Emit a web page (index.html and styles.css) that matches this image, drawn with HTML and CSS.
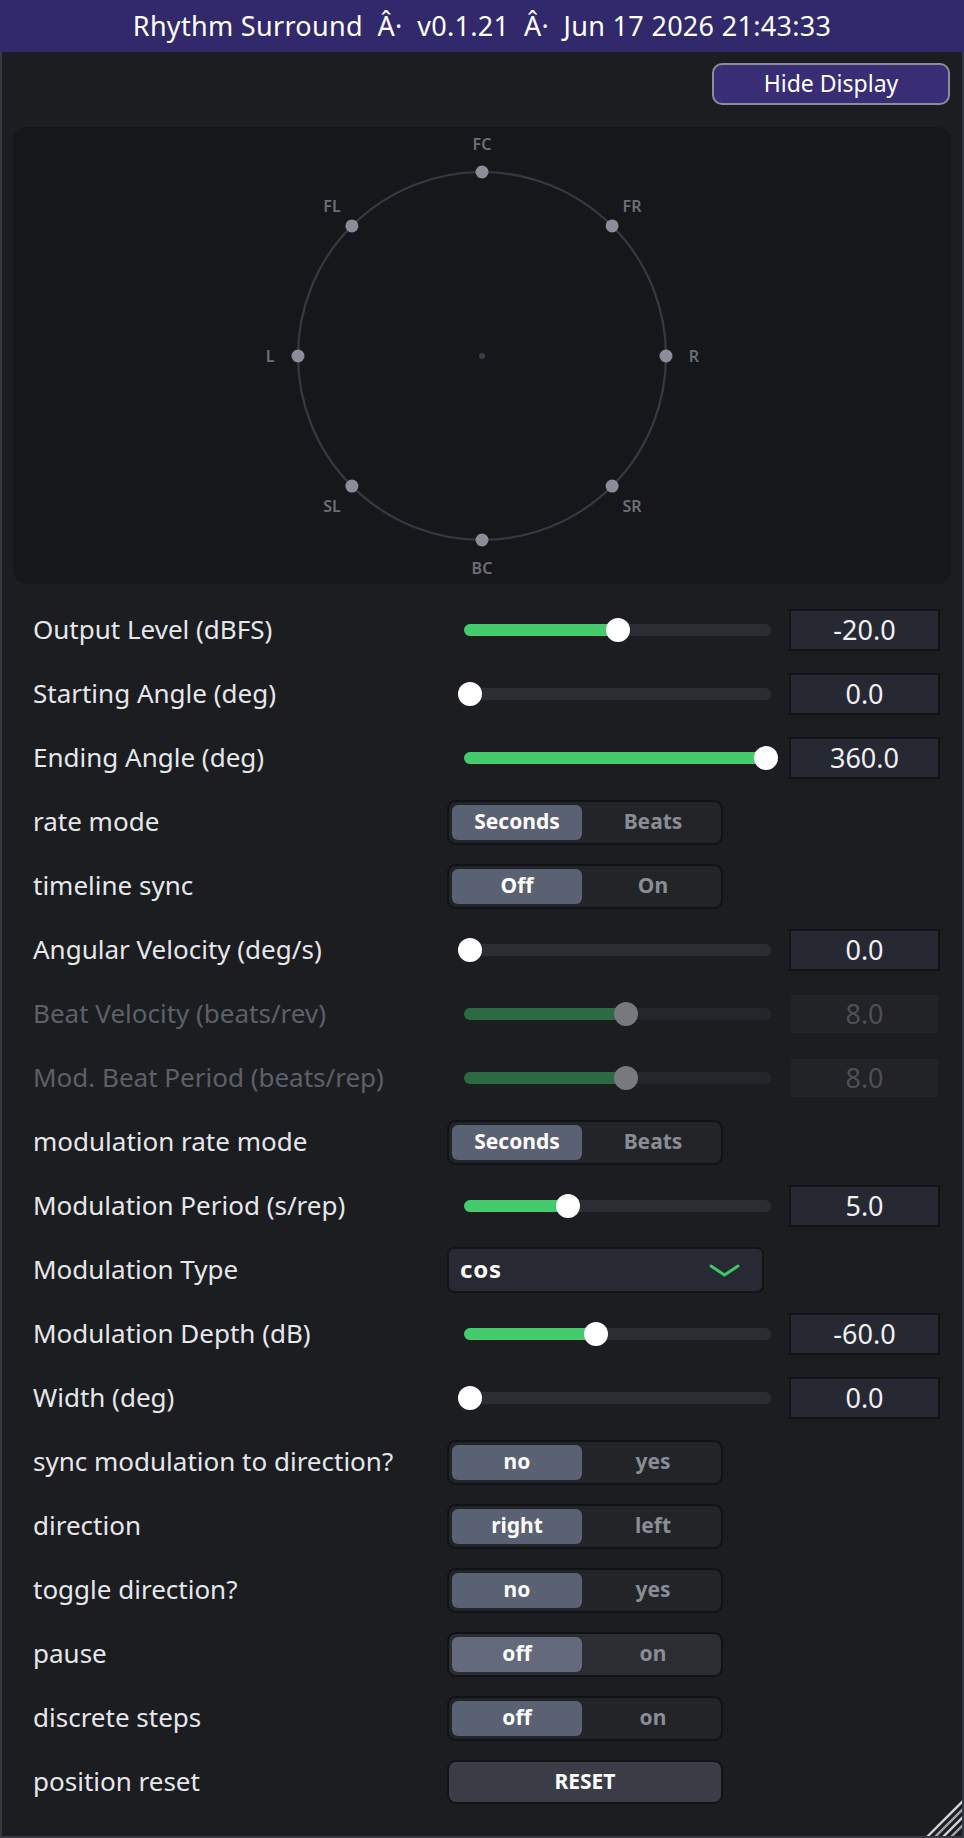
FILE: index.html
```html
<!DOCTYPE html>
<html lang="en">
<head>
<meta charset="utf-8">
<title>Rhythm Surround</title>
<link rel="stylesheet" href="styles.css">
</head>
<body>
<div class="app">
  <header class="titlebar">Rhythm Surround&nbsp; Â·&nbsp; v0.1.21&nbsp; Â·&nbsp; Jun 17 2026 21:43:33</header>
  <main class="frame">
    <div class="toolbar">
      <button class="hide-btn">Hide Display</button>
    </div>

    <section class="display">
      <svg class="speakers" width="938" height="457" viewBox="0 0 938 457">
        <circle cx="469" cy="229" r="184" fill="none" stroke="#363940" stroke-width="2.2"/>
        <circle cx="469" cy="229" r="3" fill="#3a3d45"/>
        <g fill="#8b8e98">
          <circle cx="469" cy="45" r="6.5"/>
          <circle cx="599.1" cy="98.9" r="6.5"/>
          <circle cx="653" cy="229" r="6.5"/>
          <circle cx="599.1" cy="359.1" r="6.5"/>
          <circle cx="469" cy="413" r="6.5"/>
          <circle cx="338.9" cy="359.1" r="6.5"/>
          <circle cx="285" cy="229" r="6.5"/>
          <circle cx="338.9" cy="98.9" r="6.5"/>
        </g>
        <g class="spk-label">
          <text x="469" y="17">FC</text>
          <text x="619" y="79">FR</text>
          <text x="681" y="229">R</text>
          <text x="619" y="379">SR</text>
          <text x="469" y="441">BC</text>
          <text x="319" y="379">SL</text>
          <text x="257" y="229">L</text>
          <text x="319" y="79">FL</text>
        </g>
      </svg>
    </section>

    <section class="params">
      <div class="row">
        <span class="label">Output Level (dBFS)</span>
        <div class="slider"><div class="fill" style="width:154px"></div><div class="thumb" style="left:142px"></div></div>
        <div class="value">-20.0</div>
      </div>
      <div class="row">
        <span class="label">Starting Angle (deg)</span>
        <div class="slider"><div class="thumb" style="left:-6px"></div></div>
        <div class="value">0.0</div>
      </div>
      <div class="row">
        <span class="label">Ending Angle (deg)</span>
        <div class="slider"><div class="fill" style="width:302px"></div><div class="thumb" style="left:290px"></div></div>
        <div class="value">360.0</div>
      </div>
      <div class="row">
        <span class="label">rate mode</span>
        <div class="seg"><span class="opt on">Seconds</span><span class="opt">Beats</span></div>
      </div>
      <div class="row">
        <span class="label">timeline sync</span>
        <div class="seg"><span class="opt on">Off</span><span class="opt">On</span></div>
      </div>
      <div class="row">
        <span class="label">Angular Velocity (deg/s)</span>
        <div class="slider"><div class="thumb" style="left:-6px"></div></div>
        <div class="value">0.0</div>
      </div>
      <div class="row disabled">
        <span class="label">Beat Velocity (beats/rev)</span>
        <div class="slider"><div class="fill" style="width:162px"></div><div class="thumb" style="left:150px"></div></div>
        <div class="value">8.0</div>
      </div>
      <div class="row disabled">
        <span class="label">Mod. Beat Period (beats/rep)</span>
        <div class="slider"><div class="fill" style="width:162px"></div><div class="thumb" style="left:150px"></div></div>
        <div class="value">8.0</div>
      </div>
      <div class="row">
        <span class="label">modulation rate mode</span>
        <div class="seg"><span class="opt on">Seconds</span><span class="opt">Beats</span></div>
      </div>
      <div class="row">
        <span class="label">Modulation Period (s/rep)</span>
        <div class="slider"><div class="fill" style="width:104px"></div><div class="thumb" style="left:92px"></div></div>
        <div class="value">5.0</div>
      </div>
      <div class="row">
        <span class="label">Modulation Type</span>
        <div class="select">
          <span>cos</span>
          <svg class="chev" width="31" height="13" viewBox="0 0 31 13"><path d="M2 2 L15.5 11 L29 2" fill="none" stroke="#3fc467" stroke-width="3" stroke-linecap="round" stroke-linejoin="round"/></svg>
        </div>
      </div>
      <div class="row">
        <span class="label">Modulation Depth (dB)</span>
        <div class="slider"><div class="fill" style="width:132px"></div><div class="thumb" style="left:120px"></div></div>
        <div class="value">-60.0</div>
      </div>
      <div class="row">
        <span class="label">Width (deg)</span>
        <div class="slider"><div class="thumb" style="left:-6px"></div></div>
        <div class="value">0.0</div>
      </div>
      <div class="row">
        <span class="label">sync modulation to direction?</span>
        <div class="seg"><span class="opt on">no</span><span class="opt">yes</span></div>
      </div>
      <div class="row">
        <span class="label">direction</span>
        <div class="seg"><span class="opt on">right</span><span class="opt">left</span></div>
      </div>
      <div class="row">
        <span class="label">toggle direction?</span>
        <div class="seg"><span class="opt on">no</span><span class="opt">yes</span></div>
      </div>
      <div class="row">
        <span class="label">pause</span>
        <div class="seg hover"><span class="opt on">off</span><span class="opt">on</span></div>
      </div>
      <div class="row">
        <span class="label">discrete steps</span>
        <div class="seg"><span class="opt on">off</span><span class="opt">on</span></div>
      </div>
      <div class="row">
        <span class="label">position reset</span>
        <button class="reset">RESET</button>
      </div>
    </section>

    <svg class="grip" width="36" height="36" viewBox="0 0 36 36">
      <g stroke-width="2.4" stroke-linecap="square">
        <line x1="36" y1="2" x2="2" y2="36" stroke="#d0d2d6"/>
        <line x1="36" y1="10" x2="10" y2="36" stroke="#a3a5ab"/>
        <line x1="36" y1="18" x2="18" y2="36" stroke="#d0d2d6"/>
        <line x1="36" y1="26" x2="26" y2="36" stroke="#a3a5ab"/>
      </g>
    </svg>
  </main>
</div>
</body>
</html>
```
FILE: styles.css
```css
* { box-sizing: border-box; }

html, body {
  margin: 0;
  padding: 0;
  background: #1c1d21;
}

body {
  width: 964px;
  height: 1838px;
  overflow: hidden;
  font-family: "Noto Sans", "DejaVu Sans", sans-serif;
  color: #e4e5ea;
}

.app {
  display: flex;
  flex-direction: column;
  height: 1838px;
}

.titlebar {
  height: 52px;
  flex: 0 0 52px;
  background: #32296d;
  color: #ffffff;
  font-size: 27px;
  letter-spacing: 0.3px;
  display: flex;
  align-items: center;
  justify-content: center;
  white-space: pre;
  padding-bottom: 2px;
}

.frame {
  position: relative;
  flex: 1;
  background: #1c1d21;
  border-left: 2px solid #353941;
  border-right: 2px solid #353941;
  border-bottom: 2px solid #353941;
  display: flex;
  flex-direction: column;
}

.toolbar {
  display: flex;
  justify-content: flex-end;
  padding: 11px 12px 0 0;
}

.hide-btn {
  width: 238px;
  height: 42px;
  background: #392e76;
  border: 2px solid #8b8f99;
  border-radius: 10px;
  color: #ffffff;
  font-family: "Noto Sans", "DejaVu Sans", sans-serif;
  font-size: 23px;
  padding: 0 0 2px 0;
}

.display {
  margin: 22px 0 0 11px;
  width: 938px;
  height: 457px;
  background: #16171b;
  border-radius: 14px;
}

.speakers { display: block; }

.spk-label text {
  font-family: "Noto Sans", "DejaVu Sans", sans-serif;
  font-size: 16px;
  font-weight: 600;
  fill: #6c6f78;
  text-anchor: middle;
  dominant-baseline: central;
}

.params {
  margin-top: 14px;
  display: flex;
  flex-direction: column;
}

.row {
  height: 64px;
  display: grid;
  grid-template-columns: 414px 342px 151px;
  align-items: center;
  padding-left: 31px;
}

.label {
  font-size: 26px;
  color: #e6e7eb;
  white-space: nowrap;
  padding-bottom: 2px;
}

.slider {
  position: relative;
  width: 307px;
  height: 12px;
  margin-left: 17px;
  background: #2b2d35;
  border-radius: 6px;
}

.fill {
  height: 12px;
  background: #44cb6c;
  border-radius: 6px;
}

.thumb {
  position: absolute;
  top: -6px;
  width: 24px;
  height: 24px;
  border-radius: 50%;
  background: #ffffff;
}

.value {
  width: 151px;
  height: 42px;
  background: #262931;
  background-clip: padding-box;
  border: 2px solid #121317;
  color: #eef0f4;
  font-size: 27px;
  display: flex;
  align-items: center;
  justify-content: center;
  padding-bottom: 1px;
}

.disabled .label { color: #5d6067; }
.disabled .slider { background: #24262b; }
.disabled .fill { background: #2b6a43; }
.disabled .thumb { background: #78797e; }
.disabled .value {
  background: #212327;
  background-clip: padding-box;
  border-color: transparent;
  color: #4d5057;
}

.seg {
  width: 276px;
  height: 45px;
  display: flex;
  gap: 6px;
  padding: 3px;
  background: #222428;
  border: 2px solid #111216;
  border-radius: 9px;
}

.seg.hover { background: #2b2d33; }

.opt {
  flex: 0 0 130px;
  display: flex;
  align-items: center;
  justify-content: center;
  border-radius: 6px;
  font-size: 21px;
  font-weight: 700;
  color: #8a8d96;
  padding-bottom: 2px;
}

.opt.on {
  background: #5a6173;
  color: #ffffff;
}

.seg.hover .opt.on { background: #646a7b; }

.select {
  width: 317px;
  height: 46px;
  display: flex;
  align-items: center;
  justify-content: space-between;
  padding: 0 22px 0 11px;
  background: #272a32;
  border: 2px solid #131418;
  border-radius: 7px;
  font-size: 24px;
  font-weight: 700;
  letter-spacing: 0.8px;
  color: #ffffff;
}

.select span { padding-bottom: 3px; }

.chev { display: block; margin-top: 1px; }

.reset {
  width: 276px;
  height: 44px;
  background: #3a3d46;
  border: 2px solid #121317;
  border-radius: 9px;
  color: #ffffff;
  font-family: "Noto Sans", "DejaVu Sans", sans-serif;
  font-size: 21px;
  font-weight: 700;
  padding: 0 0 2px 0;
}

.grip {
  position: absolute;
  right: 0;
  bottom: 0;
}
```
